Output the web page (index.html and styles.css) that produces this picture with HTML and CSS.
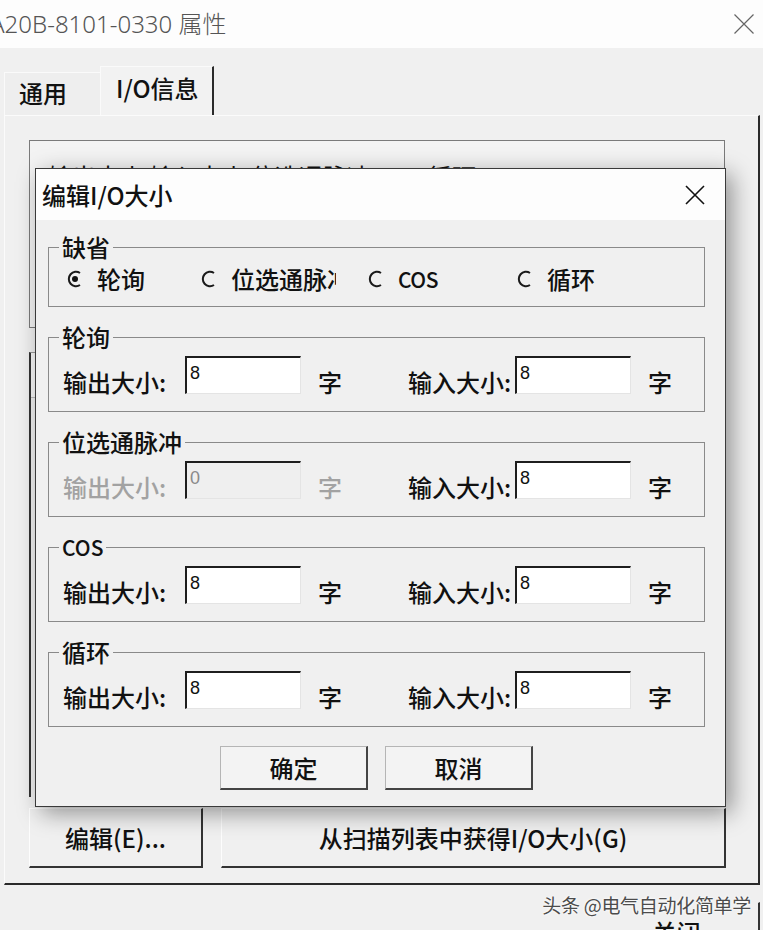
FILE: index.html
```html
<!DOCTYPE html>
<html lang="zh-CN">
<head>
<meta charset="utf-8">
<title>A20B-8101-0330 属性</title>
<link rel="stylesheet" href="styles.css">
</head>
<body>
<div class="window">
  <div class="titlebar">
    <span class="title">A20B-8101-0330 属性</span>
    <svg class="win-close" width="20" height="20" viewBox="0 0 20 20"><path d="M0.5 0.5 L19.5 19.5 M19.5 0.5 L0.5 19.5" stroke="#666" stroke-width="1.2" fill="none"/></svg>
  </div>
  <div class="tabs">
    <div class="tab">通用</div>
    <div class="tab active">I/O信息</div>
  </div>
  <div class="panel">
    <div class="listbox"><div class="list-row">输出大小 输入大小 位选通脉冲 COS 循环</div></div>
    <div class="list2"><div class="list2-head"></div></div>
    <div class="panel-buttons">
      <button class="btn3d btn-edit">编辑(E)...</button>
      <button class="btn3d btn-scan">从扫描列表中获得I/O大小(G)</button>
    </div>
  </div>
  <div class="footer">
    <button class="btn3d btn-close">关闭</button>
  </div>
  <div class="watermark">头条 @电气自动化简单学</div>

  <div class="dialog">
    <div class="dlg-title">
      <span>编辑I/O大小</span>
      <svg class="dlg-close" width="20" height="20" viewBox="0 0 20 20"><path d="M1 1 L19 19 M19 1 L1 19" stroke="#111" stroke-width="1.6" fill="none"/></svg>
    </div>
    <div class="dlg-body">
      <fieldset class="group group-default">
        <legend>缺省</legend>
        <div class="radio-row">
          <div class="radio r1"><svg width="18" height="18" viewBox="0 0 18 18"><path d="M14 3 A7.2 7.2 0 1 0 14 15" stroke="#1a1a1a" stroke-width="2" fill="none"/><circle cx="9" cy="9" r="3" fill="#111"/></svg><span class="rlabel">轮询</span></div>
          <div class="radio r2"><svg width="18" height="18" viewBox="0 0 18 18"><path d="M14 3 A7.2 7.2 0 1 0 14 15" stroke="#1a1a1a" stroke-width="2" fill="none"/></svg><span class="rlabel clip">位选通脉冲</span></div>
          <div class="radio r3"><svg width="18" height="18" viewBox="0 0 18 18"><path d="M14 3 A7.2 7.2 0 1 0 14 15" stroke="#1a1a1a" stroke-width="2" fill="none"/></svg><span class="rlabel latin">COS</span></div>
          <div class="radio r4"><svg width="18" height="18" viewBox="0 0 18 18"><path d="M14 3 A7.2 7.2 0 1 0 14 15" stroke="#1a1a1a" stroke-width="2" fill="none"/></svg><span class="rlabel">循环</span></div>
        </div>
      </fieldset>

      <fieldset class="group">
        <legend>轮询</legend>
        <div class="size-row">
          <span class="lbl lbl-out">输出大小:</span><div class="field">8</div><span class="unit unit-out">字</span>
          <span class="lbl lbl-in">输入大小:</span><div class="field">8</div><span class="unit">字</span>
        </div>
      </fieldset>

      <fieldset class="group">
        <legend>位选通脉冲</legend>
        <div class="size-row">
          <span class="lbl lbl-out disabled">输出大小:</span><div class="field field-disabled">0</div><span class="unit unit-out disabled">字</span>
          <span class="lbl lbl-in">输入大小:</span><div class="field">8</div><span class="unit">字</span>
        </div>
      </fieldset>

      <fieldset class="group">
        <legend class="latin-legend">COS</legend>
        <div class="size-row">
          <span class="lbl lbl-out">输出大小:</span><div class="field">8</div><span class="unit unit-out">字</span>
          <span class="lbl lbl-in">输入大小:</span><div class="field">8</div><span class="unit">字</span>
        </div>
      </fieldset>

      <fieldset class="group">
        <legend>循环</legend>
        <div class="size-row">
          <span class="lbl lbl-out">输出大小:</span><div class="field">8</div><span class="unit unit-out">字</span>
          <span class="lbl lbl-in">输入大小:</span><div class="field">8</div><span class="unit">字</span>
        </div>
      </fieldset>

      <div class="dlg-buttons">
        <button class="btn3d dlg-btn">确定</button>
        <button class="btn3d dlg-btn">取消</button>
      </div>
    </div>
  </div>
</div>
</body>
</html>
```

FILE: styles.css
```css
* { box-sizing: border-box; }

html, body {
  margin: 0;
  padding: 0;
}

body {
  width: 768px;
  height: 934px;
  overflow: hidden;
  background: #ffffff;
  font-family: "Noto Sans CJK SC", "Noto Sans", sans-serif;
  color: #111;
}

.window {
  position: relative;
  width: 763px;
  height: 930px;
  background: #f0f0f0;
  overflow: hidden;
}

/* ---------- main window title ---------- */
.titlebar {
  height: 48px;
  background: #fdfdfd;
  display: flex;
  align-items: center;
  justify-content: space-between;
  overflow: hidden;
  padding-bottom: 3px;
}

.title {
  margin-left: -10px;
  font-family: "Noto Sans", "Noto Sans CJK SC", sans-serif;
  font-size: 24px;
  font-weight: 300;
  color: #555;
  white-space: nowrap;
}

.win-close {
  margin-right: 9px;
  margin-top: 2px;
}

/* ---------- tabs ---------- */
.tabs {
  height: 67px;
  display: flex;
  align-items: flex-end;
  padding-left: 4px;
}

.tab {
  width: 96px;
  height: 43px;
  padding-left: 14px;
  font-size: 24px;
  font-weight: 500;
  line-height: 40px;
  background: #eeeeee;
  border-top: 1px solid #fafafa;
  border-left: 1px solid #fafafa;
}

.tab.active {
  width: 114px;
  height: 49px;
  padding-left: 15px;
  line-height: 42px;
  background: #f2f2f2;
  border-right: 2px solid #2a2a2a;
}

/* ---------- property panel ---------- */
.panel {
  margin-left: 4px;
  width: 756px;
  height: 770px;
  border-top: 1px solid #fbfbfb;
  border-left: 1px solid #fbfbfb;
  border-right: 2px solid #2a2a2a;
  border-bottom: 2px solid #2a2a2a;
  padding: 24px 0 0 24px;
}

.listbox {
  width: 696px;
  height: 188px;
  border: 1px solid #7a7a7a;
  background: #f3f3f3;
  padding: 17px 0 0 18px;
  font-size: 24px;
}

.list-row {
  white-space: nowrap;
  color: #111;
}

.list2 {
  margin-top: 24px;
  width: 696px;
  height: 445px;
  border-left: 2px solid #333;
  border-top: 1px solid #9a9a9a;
}

.list2-head {
  width: 6px;
  height: 45px;
  border-right: 1px solid #bdbdbd;
  border-bottom: 1px solid #bdbdbd;
  background: #f7f7f7;
}

.panel-buttons {
  margin-top: 11px;
  display: flex;
  gap: 18px;
}

.btn3d {
  font-family: "Noto Sans CJK SC", "Noto Sans", sans-serif;
  font-size: 24px;
  font-weight: 500;
  color: #111;
  background: #f0f0f0;
  border-top: 1px solid #fdfdfd;
  border-left: 1px solid #fdfdfd;
  border-right: 2px solid #333;
  border-bottom: 2px solid #333;
  padding: 0;
  margin: 0;
}

.btn-edit {
  width: 174px;
  height: 60px;
}

.btn-scan {
  width: 505px;
  height: 60px;
}

/* ---------- footer ---------- */
.footer {
  height: 45px;
  display: flex;
  justify-content: flex-end;
  padding-right: 3px;
  padding-top: 17px;
}

.btn-close {
  width: 166px;
  height: 60px;
  flex: none;
  border-top-color: #f0f0f0;
  border-left-color: #f0f0f0;
}

.watermark {
  position: absolute;
  right: 12px;
  top: 891px;
  font-size: 19px;
  color: #4c4c4c;
  letter-spacing: -0.3px;
  text-shadow: 0 0 2px #fff, 0 0 3px #fff;
  white-space: nowrap;
}

/* ---------- modal dialog ---------- */
.dialog {
  position: absolute;
  left: 35px;
  top: 168px;
  width: 691px;
  height: 639px;
  border: 1px solid #3a3a3a;
  background: #f0f0f0;
  box-shadow: 6px 6px 22px rgba(0, 0, 0, 0.4);
  font-weight: 500;
}

.dlg-title {
  height: 51px;
  background: #fdfdfd;
  display: flex;
  align-items: center;
  justify-content: space-between;
  padding-left: 6px;
  padding-right: 20px;
  font-size: 24px;
  color: #111;
}

.dlg-close {
  margin-top: 1px;
}

.dlg-body {
  padding: 11px 20px 0 12px;
}

.group {
  margin: 0 0 14px 0;
  padding: 3px 10px 17px 10px;
  border: 1px solid #8a8a8a;
  min-width: 0;
}

.group legend {
  padding: 0 3px;
  font-size: 24px;
  line-height: 32px;
  color: #111;
}

.group .latin-legend {
  font-size: 21px;
}

.group-default {
  padding-top: 2px;
  padding-bottom: 13px;
}

.radio-row {
  display: flex;
  align-items: center;
  height: 28px;
  padding-left: 7px;
}

.radio {
  display: flex;
  align-items: center;
  font-size: 24px;
  line-height: 28px;
  white-space: nowrap;
}

.radio svg {
  flex: none;
  margin-right: 13px;
}

.r1 { width: 134px; }
.r2 { width: 167px; }
.r3 { width: 149px; }

.rlabel.clip {
  display: block;
  width: 105px;
  overflow: hidden;
}

.rlabel.latin {
  font-size: 21px;
  letter-spacing: -0.5px;
}

.size-row {
  display: flex;
  align-items: flex-end;
  padding-left: 4px;
  height: 38px;
}

.lbl, .unit {
  font-size: 24px;
  line-height: 24px;
  white-space: nowrap;
  color: #111;
}

.lbl-out { width: 122px; }
.lbl-in { width: 107px; }

.unit { margin-left: 17px; }
.unit-out { width: 90px; }

.field {
  flex: none;
  width: 116px;
  height: 38px;
  background: #ffffff;
  border-top: 2px solid #1e1e1e;
  border-left: 2px solid #1e1e1e;
  border-right: 1px solid #e4e4e4;
  border-bottom: 1px solid #e4e4e4;
  padding: 5px 0 0 3px;
  font-family: "Liberation Sans", Arial, sans-serif;
  font-size: 18px;
  font-weight: 400;
  line-height: 20px;
  color: #111;
}

.field-disabled {
  background: #efefef;
  color: #8a8a8a;
}

.disabled {
  color: #a2a2a2;
}

.dlg-buttons {
  display: flex;
  gap: 17px;
  padding-left: 172px;
  margin-top: 19px;
}

.dlg-btn {
  width: 148px;
  height: 44px;
  background: #f3f3f3;
  border-top: 1px solid #b5b5b5;
  border-left: 1px solid #b5b5b5;
  border-right: 2px solid #444;
  border-bottom: 2px solid #444;
  line-height: 40px;
}
```
